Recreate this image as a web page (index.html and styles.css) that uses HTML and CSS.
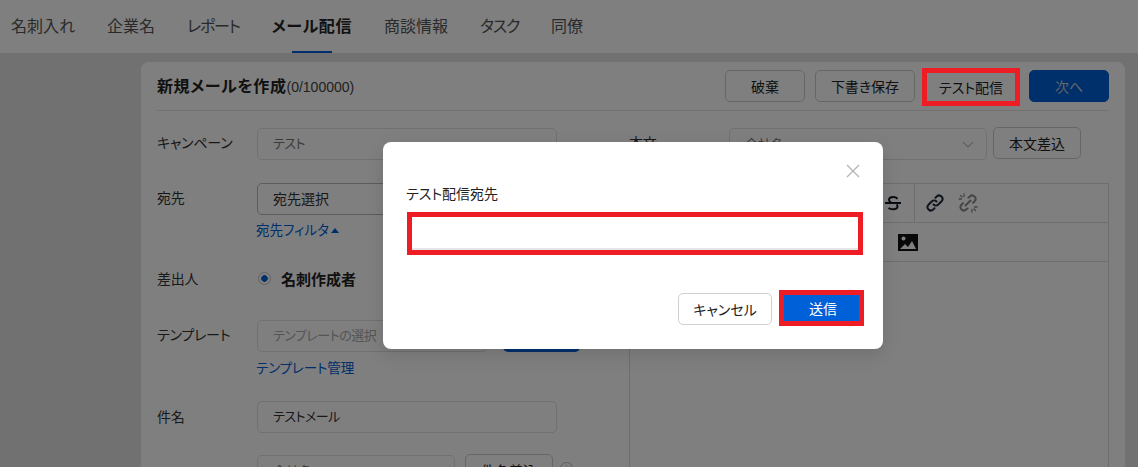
FILE: index.html
```html
<!DOCTYPE html>
<html lang="ja">
<head>
<meta charset="utf-8">
<title>テスト配信</title>
<link rel="stylesheet" href="styles.css">
</head>
<body>
<header class="tabs">
  <a class="tab">名刺入れ</a>
  <a class="tab">企業名</a>
  <a class="tab tab-narrow">レポート</a>
  <a class="tab tab-active">メール配信</a>
  <a class="tab">商談情報</a>
  <a class="tab tab-narrow">タスク</a>
  <a class="tab">同僚</a>
</header>
<main class="main">
  <section class="card">
    <div class="card-head">
      <h1 class="card-title">新規メールを作成<span class="count">(0/100000)</span></h1>
      <div class="actions">
        <button class="btn btn-discard">破棄</button>
        <button class="btn btn-draft">下書き保存</button>
        <button class="btn btn-test">テスト配信</button>
        <button class="btn btn-next">次へ</button>
      </div>
    </div>
    <div class="columns">
      <div class="col-left">
        <div class="row row-camp">
          <label class="label">キャンペーン</label>
          <div class="field field-wide muted kana">テスト</div>
        </div>
        <div class="row row-to">
          <label class="label">宛先</label>
          <div class="stack">
            <div class="field field-wide strong-border">宛先選択</div>
            <a class="link">宛先フィルタ<span class="caret"></span></a>
          </div>
        </div>
        <div class="row row-from">
          <label class="label">差出人</label>
          <span class="radio"></span>
          <span class="radio-text">名刺作成者</span>
        </div>
        <div class="row row-tpl">
          <label class="label">テンプレート</label>
          <div class="stack">
            <div class="tpl-line">
              <div class="field field-tpl placeholder kana">テンプレートの選択</div>
              <button class="btn-tpl">適用</button>
            </div>
            <a class="link">テンプレート管理</a>
          </div>
        </div>
        <div class="row row-subject">
          <label class="label">件名</label>
          <div class="field field-wide kana">テストメール</div>
        </div>
        <div class="row row-merge">
          <label class="label"></label>
          <div class="field field-merge muted">会社名</div>
          <button class="btn btn-merge">件名差込</button>
          <span class="info">i</span>
        </div>
      </div>
      <div class="col-right">
        <div class="row row-body">
          <label class="label">本文</label>
          <div class="field field-select muted">会社名
            <svg class="chevron" viewBox="0 0 12 7" width="12" height="7"><path d="M1 1l5 5 5-5" fill="none" stroke="#bfbfbf" stroke-width="1.2"/></svg>
          </div>
          <button class="btn btn-insert">本文差込</button>
        </div>
        <div class="editor">
          <div class="tool-row tool-row-one">
            <svg class="ico-strike" viewBox="0 0 16 16" width="16" height="16"><path d="M12.500 3.800C11.600 2.600 10 2 8.300 2 6 2 4 3 4 4.800c0 1.200.8 2 2 2.500M3.500 12.800c.9 1 2.600 1.500 4.500 1.500 2.600 0 4.500-1.100 4.500-3 0-.8-.3-1.400-.8-1.900" fill="none" stroke="#111a26" stroke-width="2"/><path d="M0 8h16" stroke="#111a26" stroke-width="1.800"/></svg>
            <span class="tool-sep"></span>
            <svg class="ico-link" viewBox="0 0 20 20" width="20" height="20"><g fill="none" stroke="#1f2a37" stroke-width="2" stroke-linecap="round"><path d="M8.500 11.500a3.400 3.400 0 0 0 4.800 0l3.300-3.300a3.400 3.400 0 0 0-4.800-4.800l-1.300 1.300"/><path d="M11.500 8.500a3.400 3.400 0 0 0-4.800 0l-3.300 3.300a3.400 3.400 0 0 0 4.800 4.800l1.300-1.300"/></g></svg>
            <svg class="ico-unlink" viewBox="0 0 20 20" width="20" height="20"><g fill="none" stroke="#8a8a8a" stroke-width="2" stroke-linecap="round"><path d="M10.500 4.500l1.300-1.100a3.400 3.400 0 0 1 4.800 4.800l-1.600 1.600"/><path d="M9.500 15.500l-1.300 1.100a3.400 3.400 0 0 1-4.800-4.800l1.600-1.600"/><path d="M7.500 12.500l5-5"/></g><g stroke="#8a8a8a" stroke-width="1.300" stroke-linecap="round"><path d="M6 1v2.500M1 6h2.500M2.500 2.500l1.500 1.500M14 19v-2.500M19 14h-2.500M17.500 17.500L16 16"/></g></svg>
          </div>
          <div class="tool-row tool-row-two">
            <svg class="ico-image" viewBox="0 0 20 17" width="20" height="17"><rect width="20" height="17" fill="#111"/><circle cx="5.500" cy="4.500" r="2" fill="#fff"/><path d="M2 15l5-5 3 3 4-6 4 8z" fill="#fff"/></svg>
          </div>
        </div>
      </div>
    </div>
  </section>
</main>
<div class="overlay">
  <div class="mark-test"></div>
  <div class="dialog" role="dialog">
    <div class="dialog-top">
      <svg class="close" viewBox="0 0 14 14" width="14" height="14"><path d="M1 1l12 12M13 1L1 13" stroke="#b4b4b4" stroke-width="1.300" fill="none"/></svg>
    </div>
    <div class="dialog-label">テスト配信宛先</div>
    <div class="dialog-input marked"></div>
    <div class="dialog-foot">
      <button class="btn btn-cancel">キャンセル</button>
      <button class="btn-send marked">送信</button>
    </div>
  </div>
</div>
</body>
</html>
```
FILE: styles.css
```css
* { box-sizing: border-box; }
html, body { margin: 0; padding: 0; height: 467px; overflow: hidden; }
body {
  background: #e2e2e2;
  color: #333;
  font-family: "Noto Sans CJK JP", "Liberation Sans", sans-serif;
  font-feature-settings: "palt";
  font-size: 13px;
  position: relative;
}
button { font: inherit; font-feature-settings: inherit; cursor: pointer; margin: 0; }

.tabs {
  height: 53px;
  background: #fff;
  display: flex;
  gap: 32px;
  padding-left: 11px;
  font-size: 16px;
  line-height: 50px;
  color: #555;
}
.tab { display: block; height: 53px; position: relative; white-space: nowrap; }
.tab-narrow { letter-spacing: -1.250px; }
.tab-active { color: #222; font-weight: 700; letter-spacing: .6px; }
.tab-active::after {
  content: "";
  position: absolute;
  left: 50%;
  bottom: 0;
  width: 40px;
  height: 2px;
  margin-left: -20px;
  background: #0060d8;
}

.main { padding: 9px 13px 0 141px; }
.card {
  width: 984px;
  height: 405px;
  overflow: hidden;
  background: #fff;
  border-radius: 8px 8px 0 0;
  padding: 8px 16px 0;
}
.card-head {
  display: flex;
  justify-content: space-between;
  align-items: flex-start;
  height: 41px;
  border-bottom: 1px solid #e4e4e4;
}
.card-title {
  margin: 4px 0 0;
  font-size: 16px;
  line-height: 22px;
  font-weight: 700;
  letter-spacing: .6px;
  color: #222;
  white-space: nowrap;
}
.count {
  font-family: "Liberation Sans", sans-serif;
  font-size: 14px;
  font-weight: 400;
  letter-spacing: 0;
  color: #444;
}
.actions { display: flex; gap: 10px; align-items: flex-start; }

.btn {
  height: 32px;
  background: #fff;
  border: 1px solid #ccc;
  border-radius: 5px;
  color: #222;
  font-size: 14px;
  padding: 0;
}
.btn-discard { width: 80px; }
.btn-draft { width: 100px; }
.btn-test { width: 88px; height: 28px; margin: 3px 4px 0 2px; border: none; }
.btn-next { width: 80px; background: #0060d8; border-color: #0060d8; color: #c8ccd4; }
.marked { outline: 5px solid #ee1c25; outline-offset: 0; border-radius: 0; }

.columns { display: flex; padding-top: 17px; }
.col-left { width: 472px; flex: none; }
.col-right { width: 480px; flex: none; }

.row { display: flex; align-items: flex-start; }
.label {
  width: 100px;
  flex: none;
  font-size: 14px;
  line-height: 29px;
  letter-spacing: -.2px;
  color: #333;
}
.stack { display: flex; flex-direction: column; align-items: flex-start; }

.field {
  height: 32px;
  line-height: 29px;
  border: 1px solid #e0e0e0;
  border-radius: 5px;
  background: #fff;
  padding: 0 15px;
  font-size: 13px;
  color: #333;
}
.kana { letter-spacing: -.5px; line-height: 27px; }
.field-wide { width: 300px; }
.muted { color: #777; }
.strong-border { border-color: #b8b8b8; font-size: 14px; }
.placeholder { color: #aaa; }
.link {
  display: block;
  margin: 4px 0 1px -1px;
  color: #0060d8;
  font-size: 13.500px;
  line-height: 20px;
}
.caret {
  display: inline-block;
  width: 0;
  height: 0;
  margin-left: 2px;
  vertical-align: 2px;
  border-left: 4px solid transparent;
  border-right: 4px solid transparent;
  border-bottom: 5px solid #0060d8;
}

.row-to { margin-top: 23px; }
.row-from { margin-top: 22px; align-items: center; height: 32px; }
.radio {
  width: 13px;
  height: 13px;
  margin-left: 1px;
  border: 1px solid #c4c4c4;
  border-radius: 50%;
  background: radial-gradient(circle, #0060d8 0 3px, #fff 3.500px);
  flex: none;
}
.radio-text { margin-left: 10px; font-size: 15px; font-weight: 700; color: #222; }
.row-from .label { line-height: 32px; }
.row-tpl { margin-top: 26px; }
.tpl-line { display: flex; gap: 16px; }
.field-tpl { width: 230px; }
.btn-tpl {
  width: 77px;
  height: 32px;
  border: none;
  border-radius: 5px;
  background: #0060d8;
  color: #fff;
  font-size: 14px;
}
.row-tpl .link { margin-top: 5px; letter-spacing: -.1px; }
.row-subject { margin-top: 23px; }
.row-subject .label { line-height: 31px; }
.row-merge { margin-top: 22px; }
.field-merge { width: 198px; }
.btn-merge { width: 88px; margin-left: 10px; margin-top: -1px; }
.info {
  width: 13px;
  height: 13px;
  margin: 7px 0 0 7px;
  border: 1px solid #bbb;
  border-radius: 50%;
  color: #aaa;
  font-size: 9px;
  line-height: 11px;
  text-align: center;
}

.field-select {
  width: 258px;
  position: relative;
}
.chevron { position: absolute; right: 12px; top: 12px; }
.btn-insert { width: 88px; margin-left: 6px; margin-top: -1px; }

.editor {
  width: 480px;
  height: 290px;
  margin-top: 23px;
  border: 1px solid #ddd;
}
.tool-row { height: 39px; display: flex; align-items: center; border-bottom: 1px solid #ddd; }
.tool-row-one { padding-left: 255px; }
.tool-row-two { padding-left: 268px; }
.tool-sep { width: 1px; height: 39px; background: #ddd; margin: 0 10px 0 13px; }
.ico-unlink { margin-left: 13px; }

.overlay {
  position: absolute;
  inset: 0;
  background: rgba(0, 0, 0, .5);
  padding: 142px 0 0 383px;
}
.mark-test {
  position: absolute;
  left: 922px;
  top: 68px;
  width: 98px;
  height: 38px;
  border: 5px solid #ee1c25;
}
.dialog {
  width: 500px;
  height: 207px;
  background: #fff;
  border-radius: 8px;
  box-shadow: 0 6px 18px rgba(0, 0, 0, .12);
  padding: 0 24px 0 23px;
}
.dialog-top { height: 42px; display: flex; justify-content: flex-end; padding: 22px 0 0; margin-right: -1px; }
.close { display: block; }
.dialog-label { font-size: 14px; line-height: 18px; color: #222; }
.dialog-input {
  width: 446px;
  height: 33px;
  margin: 15px 0 0 6px;
  border-bottom: 2px solid #e6e6e6;
  background: #fff;
}
.dialog-foot { display: flex; justify-content: flex-end; align-items: flex-start; gap: 12px; margin-top: 43px; }
.btn-cancel { width: 94px; border-color: #d0d0d0; font-size: 14px; }
.btn-send {
  width: 75px;
  height: 26px;
  margin-top: 2px;
  padding: 0 0 0 3px;
  border: none;
  background: #0060d8;
  color: #fff;
  font-size: 14px;
}
```
